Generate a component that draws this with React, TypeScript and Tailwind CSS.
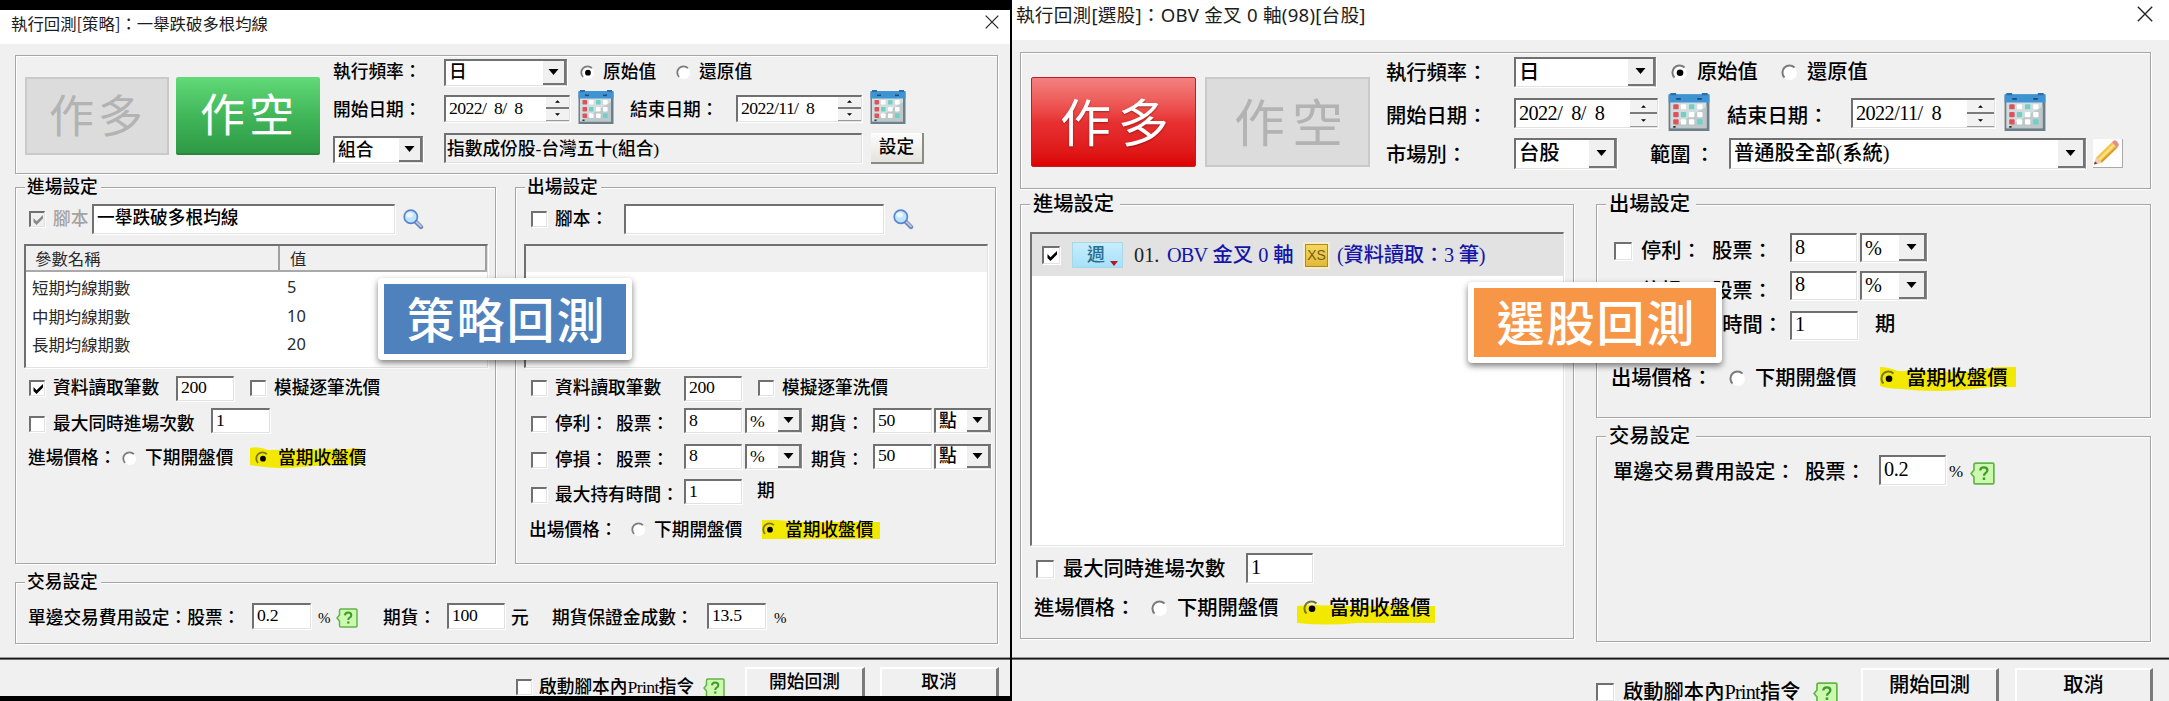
import React from "react";
import clsx from "clsx";

type Kids = { children?: React.ReactNode; className?: string };

const SUNKEN =
  "border-t-2 border-l-2 border-r border-b border-t-[#707070] border-l-[#707070] border-r-[#e2e2e2] border-b-[#e2e2e2] shadow-[1px_1px_0_#fff]";

function Group({ title, big, className, children }: Kids & { title?: string; big?: boolean }) {
  return (
    <section
      className={clsx(
        "shrink-0 border border-[#a6a6a6] shadow-[1px_1px_0_#fff,inset_1px_1px_0_#fff]",
        className,
      )}
    >
      {title && (
        <h2
          className={clsx(
            "ml-[9px] whitespace-nowrap bg-[#f0f0f0] font-medium",
            big ? "-mt-[12px] h-[22px] w-[90px] pl-[3px] leading-[22px]" : "-mt-[11px] h-[20px] w-[76px] pl-[2px] leading-[20px]",
          )}
        >
          {title}
        </h2>
      )}
      {children}
    </section>
  );
}

function Row({ className, children }: Kids) {
  return <div className={clsx("grid items-center whitespace-nowrap font-medium", className)}>{children}</div>;
}

function Field({ className, children }: Kids) {
  return (
    <div className={clsx(SUNKEN, "flex items-center overflow-hidden bg-white pl-[3px]", className)}>
      <span className="-mt-[3px] tracking-[-0.3px]">{children}</span>
    </div>
  );
}

function Combo({ className, arrow, children }: Kids & { arrow?: string }) {
  return (
    <div
      className={clsx(
        "flex items-stretch overflow-hidden border-t-2 border-l-2 border-r border-b border-t-[#707070] border-l-[#707070] border-r-[#8a8a8a] border-b-[#e2e2e2] bg-white pl-[3px] shadow-[1px_1px_0_#fff]",
        className,
      )}
    >
      <span className="-mt-[1px] flex flex-1 items-center">{children}</span>
      <span
        className={clsx(
          "flex shrink-0 items-center justify-center border-r-2 border-b-2 border-r-[#747474] border-b-[#747474] bg-[#f0f0f0]",
          arrow ?? "w-[23px]",
        )}
      >
        <svg viewBox="0 0 10 6" className="h-[6px] w-[11px]">
          <path d="M0 0H10L5 6Z" fill="#000" />
        </svg>
      </span>
    </div>
  );
}

function DateBox({ className, spin, children }: Kids & { spin: string }) {
  return (
    <div className={clsx(SUNKEN, "flex overflow-hidden bg-white pl-[3px]", className)}>
      <span className="-mt-[1px] flex flex-1 items-center tracking-[-0.6px] whitespace-pre">{children}</span>
      <span className={clsx("flex shrink-0 flex-col", spin)}>
        <span className="flex flex-1 items-center justify-center border-b-2 border-[#7b7b7b] bg-[#f2f2f2]">
          <svg viewBox="0 0 6 3" className="h-[3px] w-[5px]"><path d="M3 0L6 3H0Z" /></svg>
        </span>
        <span className="flex flex-1 items-center justify-center border-b border-[#9b9b9b] bg-[#f2f2f2]">
          <svg viewBox="0 0 6 3" className="h-[3px] w-[5px]"><path d="M0 0H6L3 3Z" /></svg>
        </span>
      </span>
    </div>
  );
}

function Check({ on, off, big, gap, className, children }: Kids & { on?: boolean; off?: boolean; big?: boolean; gap?: string }) {
  return (
    <label className={clsx("flex items-center", gap ?? "gap-[9px]", off && "text-[#a3a3a3]", className)}>
      <span
        className={clsx(
          SUNKEN,
          "flex shrink-0 items-center justify-center",
          big ? "size-[18px]" : "size-[16px]",
          off ? "bg-[#f0f0f0]" : "bg-white",
        )}
      >
        {on && (
          <svg viewBox="0 0 12 12" className="size-[12px]">
            <path d="M1.5 4V8L4.5 11L11 4.6V1L4.5 7.2Z" fill={off ? "#8b8b8b" : "#000"} />
          </svg>
        )}
      </span>
      {children && <span>{children}</span>}
    </label>
  );
}

function Radio({ on, big, mark, className, children }: Kids & { on?: boolean; big?: boolean; mark?: React.ReactNode }) {
  return (
    <label className={clsx("relative flex items-center", big ? "gap-[9px]" : "gap-[8px]", className)}>
      {mark}
      <svg viewBox="0 0 16 16" className={clsx("relative shrink-0", big ? "size-[17px]" : "size-[15px]")}>
        {!mark && <circle cx="8.5" cy="8.5" r="6.5" fill="#fff" />}
        <path d="M3.3 12.7A6.6 6.6 0 0 1 12.7 3.3" fill="none" stroke={mark ? "#7d7820" : "#7c7c7c"} strokeWidth="1.9" />
        {on && <circle cx="8.5" cy="8.2" r="3.1" fill="#000" />}
      </svg>
      <span className="relative">{children}</span>
    </label>
  );
}

function Mark({ d, className, box }: { d: string; className: string; box: string }) {
  return (
    <svg viewBox={box} preserveAspectRatio="none" className={clsx("absolute", className)}>
      <path d={d} fill="#f3e900" />
    </svg>
  );
}

function Calendar({ className }: { className: string }) {
  const cells = [
    ["#d9545b", 4.5, 10], ["#fff", 11, 10], ["#6fd0c8", 18, 10], ["#fff", 25, 10],
    ["#d9545b", 4.5, 17], ["#6fd0c8", 11, 17], ["#fff", 18, 17], ["#fff", 25, 17],
    ["#d9545b", 4.5, 23.5], ["#fff", 11, 23.5], ["#fff", 18, 23.5], ["#6fd0c8", 25, 23.5],
  ] as const;
  return (
    <svg viewBox="0 0 36 34" preserveAspectRatio="none" className={className}>
      <rect x="0.5" y="2" width="35" height="32" fill="#6d7f88" />
      <rect x="2" y="8" width="31" height="23.5" fill="#d5dcdd" />
      <path d="M2 31.5L33 12V31.5Z" fill="#bcc8c9" />
      <rect x="0.5" y="1" width="35" height="7.5" fill="#3f93d2" />
      <rect x="2" y="0" width="5" height="2" fill="#2f6fa8" />
      <rect x="29" y="0" width="5" height="2" fill="#2f6fa8" />
      <rect x="7" y="4.5" width="4" height="1.6" fill="#1e4f7d" />
      <rect x="25" y="4.5" width="4" height="1.6" fill="#1e4f7d" />
      {cells.map(([fill, x, y]) => (
        <rect key={`${x}-${y}`} x={x} y={y} width="4.6" height="4.6" rx="0.8" fill={fill} />
      ))}
      <rect x="4.5" y="29.5" width="2" height="1.6" fill="#333" />
    </svg>
  );
}

function Magnifier() {
  return (
    <svg viewBox="0 0 21 21" className="size-[21px]">
      <path d="M12 12L18 18" stroke="#6f86b5" strokeWidth="4.4" strokeLinecap="round" />
      <path d="M13.5 13L18 17.4" stroke="#b9c8e6" strokeWidth="1.8" strokeLinecap="round" />
      <circle cx="7.8" cy="7.8" r="6.6" fill="#bfe4fb" stroke="#5b86cf" strokeWidth="1.7" />
      <ellipse cx="6.6" cy="5.8" rx="3.4" ry="2.6" fill="#eaf7ff" />
    </svg>
  );
}

function Help({ className }: { className: string }) {
  return (
    <svg viewBox="0 0 22 20" preserveAspectRatio="none" className={className}>
      <path d="M5 1H20Q21 1 21 2V18Q21 19 20 19H5Q3.5 19 3.5 17.5V13L1 10L3.5 7V2.5Q3.5 1 5 1Z" fill="#cdf8b0" stroke="#62b548" strokeWidth="1.5" />
      <path d="M9 7.4Q9.2 4.6 12.2 4.6Q15.3 4.6 15.3 7.2Q15.3 8.8 13.6 9.7Q12.3 10.4 12.3 12" fill="none" stroke="#3f9a2a" strokeWidth="2" />
      <rect x="11.2" y="13.4" width="2.2" height="2.2" fill="#3f9a2a" />
    </svg>
  );
}

function Pencil() {
  return (
    <div className="flex h-[29px] w-[30px] items-center justify-center border-r border-b border-[#a8a8a8] bg-[#fdfdfd]">
      <svg viewBox="0 0 30 29" className="h-[29px] w-[30px]">
        <path d="M1 27L3.5 19.5L19.5 4L25 9.5L9 25Z" fill="#f3c546" />
        <path d="M5.5 21L21 5.8L22.7 7.5L7.2 22.8Z" fill="#fbe08a" />
        <path d="M7.8 23.6L23.8 8.2L25 9.5L9 25Z" fill="#d79a2c" />
        <path d="M19.5 4L21.5 2.2Q23 1.4 24.8 3.2L26 4.6Q27.2 6.2 26.3 7.8L25 9.5Z" fill="#e58c86" />
        <path d="M1 27L3.5 19.5Q6 20 6.4 22.4Q8.6 22.8 9 25Z" fill="#edcfae" />
        <path d="M1 27L2 23.8L4.6 26Z" fill="#6a3b3b" />
      </svg>
    </div>
  );
}

function Close({ className }: { className: string }) {
  return (
    <svg viewBox="0 0 14 14" className={className}>
      <path d="M0.7 0.7L13.3 13.3M13.3 0.7L0.7 13.3" stroke="#222" strokeWidth="1.2" fill="none" />
    </svg>
  );
}

function SideButton({ className, children }: Kids) {
  return (
    <button className={clsx("flex shrink-0 items-center justify-center font-['Noto_Sans_CJK_TC',sans-serif] font-normal", className)}>
      {children}
    </button>
  );
}

const GRAY = "border-2 border-[#c9c9c9] bg-[#dcdcdc] text-[#b3b3b3]";

function Push({ className, children }: Kids) {
  return (
    <button
      className={clsx(
        "self-start border-t-2 border-l-2 border-r-[3px] border-t-white border-l-white border-r-[#7a7a7a] bg-[#f0f0f0] text-center",
        className,
      )}
    >
      {children}
    </button>
  );
}

function FooterRule() {
  return <div className="h-[3px] shrink-0 border-t border-b border-t-[#9a9a9a] border-b-[#6e6e6e] bg-[#161616]" />;
}

function StrategyWindow() {
  return (
    <main className="relative mt-[10px] flex h-[686px] w-[1010px] shrink-0 flex-col overflow-hidden bg-[#f0f0f0] text-[17.7px] leading-[20px]">
      <header className="flex h-[34px] shrink-0 items-start justify-between bg-white pr-[11px] pl-[11px] font-['Noto_Sans_CJK_TC',sans-serif] text-[16.4px] text-[#1c1c1c]">
        <h1 className="mt-[3px] whitespace-nowrap">執行回測[策略]：一舉跌破多根均線</h1>
        <Close className="mt-[5px] size-[14px]" />
      </header>

      <Group className="mt-[11px] ml-[15px] flex h-[119px] w-[983px] pl-[9px]">
        <SideButton className={clsx(GRAY, "mt-[21px] h-[78px] w-[144px] pb-[5px] pl-[2px] text-[45px] tracking-[4px]")}>作多</SideButton>
        <SideButton className="mt-[21px] ml-[7px] h-[78px] w-[144px] rounded-[2px] border-b-2 border-[#2b8540] bg-linear-to-b from-[#62da78] via-[#41b75a] to-[#2e9a46] pb-[4px] pl-[2px] text-[45px] tracking-[4px] text-white">作空</SideButton>
        <div className="ml-[13px]">
          <Row className="h-[32px] grid-cols-[111px_136px_96px_100px]">
            <span>執行頻率：</span>
            <Combo className="h-[27px] w-[123px]">日</Combo>
            <Radio on>原始值</Radio>
            <Radio>還原值</Radio>
          </Row>
          <Row className="h-[40px] grid-cols-[111px_134px_52px_106px_134px_40px]">
            <span className="mt-[3px]">開始日期：</span>
            <DateBox className="h-[27px] w-[126px]" spin="w-[23px]">2022/  8/  8</DateBox>
            <Calendar className="mb-[2px] h-[34px] w-[36px]" />
            <span className="mt-[3px]">結束日期：</span>
            <DateBox className="h-[27px] w-[126px]" spin="w-[23px]">2022/11/  8</DateBox>
            <Calendar className="mb-[2px] h-[34px] w-[36px]" />
          </Row>
          <Row className="h-[40px] grid-cols-[111px_427px_60px]">
            <Combo className="mt-[3px] h-[27px] w-[90px]">組合</Combo>
            <div className={clsx(SUNKEN, "flex h-[30px] w-[418px] items-center pl-px")}>指數成份股-台灣五十(組合)</div>
            <button className="h-[31px] w-[53px] border-r-2 border-b-2 border-[#8b8b85] bg-linear-to-b from-[#fdfdfc] to-[#e4e4dd]">設定</button>
          </Row>
        </div>
      </Group>

      <div className="mt-[13px] ml-[15px] flex gap-[19px]">
        <Group title="進場設定" className="h-[377px] w-[481px]">
          <Row className="h-[44px] grid-cols-[63px_311px_30px] pl-[13px]">
            <Check on off gap="gap-[8px]">腳本</Check>
            <Field className="h-[30px] w-[303px]"><span className="tracking-normal">一舉跌破多根均線</span></Field>
            <Magnifier />
          </Row>
          <div className={clsx(SUNKEN, "mt-[3px] ml-[8px] h-[124px] w-[464px] bg-white font-['Noto_Sans_CJK_TC',sans-serif] text-[16.4px] text-[#2a2a2a]")}>
            <div className="flex h-[26px] border-b-2 border-[#a9a9a9] bg-[#f0f0f0] leading-[25px]">
              <span className="w-[254px] border-r-2 border-[#a0a0a0] pl-[9px]">參數名稱</span>
              <span className="ml-[2px] w-[205px] border-r-2 border-[#a0a0a0] pl-[8px]">值</span>
            </div>
            {[["短期均線期數", "5"], ["中期均線期數", "10"], ["長期均線期數", "20"]].map(([name, value]) => (
              <div key={name} className="grid h-[28.6px] translate-y-[1px] grid-cols-[255px_100px] items-center pl-[6px]">
                <span>{name}</span>
                <span className="font-['Noto_Sans',sans-serif]">{value}</span>
              </div>
            ))}
          </div>
          <Row className="h-[40px] grid-cols-[147px_74px_140px] pl-[13px]">
            <Check on gap="gap-[8px]">資料讀取筆數</Check>
            <Field className="h-[25px] w-[58px]">200</Field>
            <Check gap="gap-[8px]">模擬逐筆洗價</Check>
          </Row>
          <Row className="h-[32px] grid-cols-[182px_70px] pl-[13px]">
            <Check gap="gap-[8px]">最大同時進場次數</Check>
            <Field className="mb-[7px] h-[25px] w-[59px]">1</Field>
          </Row>
          <Row className="h-[36px] grid-cols-[94px_133px_120px] pl-[12px]">
            <span>進場價格：</span>
            <Radio>下期開盤價</Radio>
            <Radio on mark={<Mark box="0 0 115 22" className="-top-[1px] -left-[5px] h-[22px] w-[115px]" d="M0 1Q8 -1 18 3L100 2Q108 0 110 2L113 18Q80 17 52 20Q30 23 0 18Z" />}>當期收盤價</Radio>
          </Row>
        </Group>

        <Group title="出場設定" className="h-[377px] w-[481px]">
          <Row className="h-[44px] grid-cols-[93px_269px_30px] pl-[15px]">
            <Check gap="gap-[8px]">腳本：</Check>
            <Field className="h-[30px] w-[260px]" />
            <Magnifier />
          </Row>
          <div className={clsx(SUNKEN, "mt-[3px] ml-[8px] h-[124px] w-[464px] bg-white")}>
            <div className="h-[26px] bg-[#f0f0f0]" />
          </div>
          <Row className="h-[40px] grid-cols-[153px_74px_140px] pl-[15px]">
            <Check gap="gap-[8px]">資料讀取筆數</Check>
            <Field className="h-[25px] w-[58px]">200</Field>
            <Check gap="gap-[8px]">模擬逐筆洗價</Check>
          </Row>
          <Row className="h-[32px] grid-cols-[85px_68px_61px_66px_62px_61px_58px] pl-[15px]">
            <Check gap="gap-[8px]">停利：</Check>
            <span>股票：</span>
            <Field className="mb-[7px] h-[25px] w-[58px]">8</Field>
            <Combo className="mb-[7px] h-[25px] w-[57px]">%</Combo>
            <span>期貨：</span>
            <Field className="mb-[7px] h-[25px] w-[59px]">50</Field>
            <Combo className="mb-[7px] h-[25px] w-[57px]">點</Combo>
          </Row>
          <Row className="h-[39px] grid-cols-[85px_68px_61px_66px_62px_61px_58px] pl-[15px]">
            <Check gap="gap-[8px]">停損：</Check>
            <span>股票：</span>
            <Field className="mb-[7px] h-[25px] w-[58px]">8</Field>
            <Combo className="mb-[7px] h-[25px] w-[57px]">%</Combo>
            <span>期貨：</span>
            <Field className="mb-[7px] h-[25px] w-[59px]">50</Field>
            <Combo className="mb-[7px] h-[25px] w-[57px]">點</Combo>
          </Row>
          <Row className="h-[32px] grid-cols-[153px_73px_30px] pl-[15px]">
            <Check gap="gap-[8px]">最大持有時間：</Check>
            <Field className="mb-[7px] h-[25px] w-[58px]">1</Field>
            <span className="mb-[8px]">期</span>
          </Row>
          <Row className="h-[37px] grid-cols-[102px_131px_120px] pl-[13px]">
            <span>出場價格：</span>
            <Radio>下期開盤價</Radio>
            <Radio on mark={<Mark box="0 0 118 19" className="top-0 left-0 h-[19px] w-[118px]" d="M0 0H14L40 2H118V19H0Z" />}>當期收盤價</Radio>
          </Row>
        </Group>
      </div>

      <Group title="交易設定" className="mt-[18px] ml-[15px] h-[62px] w-[983px]">
        <Row className="mt-[8px] h-[36px] grid-cols-[224px_66px_18px_47px_64px_64px_41px_155px_67px_20px] pl-[12px]">
          <span>單邊交易費用設定：股票：</span>
          <Field className="mb-[4px] h-[26px] w-[59px]">0.2</Field>
          <span className="text-[15px]">%</span>
          <Help className="h-[20px] w-[22px]" />
          <span>期貨：</span>
          <Field className="mb-[4px] h-[26px] w-[58px]">100</Field>
          <span>元</span>
          <span>期貨保證金成數：</span>
          <Field className="mb-[4px] h-[26px] w-[59px]">13.5</Field>
          <span className="text-[15px]">%</span>
        </Row>
      </Group>

      <div className="h-[13px] shrink-0" />
      <FooterRule />
      <Row className="h-[54px] shrink-0 grid-cols-[187px_42px_135px_120px] pl-[516px]">
        <Check gap="gap-[7px]">啟動腳本內<span className="tracking-[-0.6px]">Print</span>指令</Check>
        <Help className="mt-[1px] h-[20px] w-[22px]" />
        <Push className="mt-[7px] h-[40px] w-[120px] pb-[12px] leading-[24px]">開始回測</Push>
        <Push className="mt-[7px] h-[40px] w-[119px] pb-[12px] leading-[24px]">取消</Push>
      </Row>
    </main>
  );
}

function ScreenerWindow() {
  return (
    <main className="ml-[2px] flex h-[701px] w-[1157px] shrink-0 flex-col overflow-hidden bg-[#f0f0f0] text-[20.3px] leading-[22px]">
      <header className="flex h-[40px] shrink-0 items-start justify-between bg-white pr-[16px] pl-[4px] font-['Noto_Sans','Noto_Sans_CJK_TC',sans-serif] text-[18.6px] tracking-[0.25px] text-[#1c1c1c]">
        <h1 className="mt-[4px] whitespace-nowrap">執行回測[選股]：OBV 金叉 0 軸(98)[台股]</h1>
        <Close className="mt-[6px] size-[16px]" />
      </header>

      <Group className="mt-[12px] ml-[8px] flex h-[137px] w-[1131px] pl-[10px]">
        <SideButton className="mt-[24px] h-[90px] w-[165px] rounded-[2px] border border-[#b92020] bg-linear-to-b from-[#f28080] via-[#e73032] to-[#dc0000] pb-[5px] pl-[9px] text-[51px] tracking-[7px] text-white [text-shadow:0_1px_2px_rgba(90,0,0,0.5)]">作多</SideButton>
        <SideButton className={clsx(GRAY, "mt-[24px] ml-[9px] h-[90px] w-[165px] pb-[5px] pl-[9px] text-[51px] tracking-[7px]")}>作空</SideButton>
        <div className="ml-[16px]">
          <Row className="h-[38px] grid-cols-[128px_157px_110px_100px]">
            <span className="mt-[2px]">執行頻率：</span>
            <Combo className="mb-[1px] h-[30px] w-[142px]" arrow="w-[27px]">日</Combo>
            <Radio on big>原始值</Radio>
            <Radio big>還原值</Radio>
          </Row>
          <Row className="h-[44px] grid-cols-[128px_154px_59px_124px_153px_44px]">
            <span className="mt-[5px]">開始日期：</span>
            <DateBox className="h-[30px] w-[144px]" spin="w-[27px]">2022/  8/  8</DateBox>
            <Calendar className="mb-[2px] h-[38px] w-[42px]" />
            <span className="mt-[5px]">結束日期：</span>
            <DateBox className="h-[30px] w-[144px]" spin="w-[27px]">2022/11/  8</DateBox>
            <Calendar className="mb-[2px] h-[38px] w-[42px]" />
          </Row>
          <Row className="h-[36px] grid-cols-[128px_136px_79px_364px_30px]">
            <span className="mt-[4px]">市場別：</span>
            <Combo className="h-[31px] w-[103px]" arrow="w-[27px]">台股</Combo>
            <span className="mt-[4px]">範圍<span className="ml-[4px]">：</span></span>
            <Combo className="h-[31px] w-[357px]" arrow="w-[27px]">普通股全部(系統)</Combo>
            <Pencil />
          </Row>
        </div>
      </Group>

      <div className="mt-[15px] ml-[8px] flex gap-[22px]">
        <Group big title="進場設定" className="h-[435px] w-[554px]">
          <div className={clsx(SUNKEN, "mt-[17px] ml-[9px] h-[314px] w-[534px] bg-white text-[#1414a8]")}>
            <Row className="h-[42px] grid-cols-[30px_62px_33px_136px_34px_160px] bg-[#e2e2e2] pl-[10px]">
              <Check on big />
              <span className="flex h-[26px] w-[51px] items-center justify-center border border-[#a9d6e8] bg-linear-to-b from-[#c8edfb] to-[#a4e2fb] text-[18px] text-[#2b6f8c]">
                <span className="ml-[10px]">週</span>
                <svg viewBox="0 0 8 5" className="mt-[17px] ml-[5px] h-[5px] w-[8px]"><path d="M0 0H8L4 5Z" fill="#c20f2c" /></svg>
              </span>
              <span className="text-[#222]">01.</span>
              <span><span className="tracking-[-0.8px]">OBV</span> 金叉 0 軸</span>
              <span className="flex size-[27px] items-center justify-center border-2 border-[#f6eccb] bg-[#b08a1c] p-px">
                <span className="flex size-full items-center justify-center bg-linear-to-b from-[#f3d860] to-[#e0b93a] font-['Liberation_Sans',sans-serif] text-[14px] font-normal text-[#7b5b10]">XS</span>
              </span>
              <span className="tracking-[-0.2px]">(資料讀取：3 筆)</span>
            </Row>
          </div>
          <Row className="h-[45px] grid-cols-[210px_70px] pl-[15px]">
            <Check big>最大同時進場次數</Check>
            <Field className="mb-[1px] h-[30px] w-[67px]">1</Field>
          </Row>
          <Row className="h-[34px] grid-cols-[117px_152px_140px] pl-[13px]">
            <span>進場價格：</span>
            <Radio big>下期開盤價</Radio>
            <Radio on big mark={<Mark box="0 0 138 20" className="top-[8px] -left-[6px] h-[20px] w-[138px]" d="M0 1L12 0L60 1H138V18H60Q30 21 0 18Z" />}>當期收盤價</Radio>
          </Row>
        </Group>

        <div className="flex flex-col gap-[18px]">
          <Group big title="出場設定" className="h-[214px] w-[555px]">
            <Row className="mt-[17px] h-[38px] grid-cols-[98px_78px_70px_70px] pl-[17px]">
              <Check big>停利：</Check>
              <span>股票：</span>
              <Field className="mb-[7px] h-[29px] w-[67px]">8</Field>
              <Combo className="mb-[7px] h-[29px] w-[67px]" arrow="w-[27px]">%</Combo>
            </Row>
            <Row className="h-[42px] grid-cols-[98px_78px_70px_70px] pl-[17px]">
              <Check big>停損：</Check>
              <span>股票：</span>
              <Field className="mb-[12px] h-[29px] w-[67px]">8</Field>
              <Combo className="mb-[12px] h-[29px] w-[67px]" arrow="w-[27px]">%</Combo>
            </Row>
            <Row className="h-[26px] grid-cols-[176px_85px_30px] pl-[17px]">
              <Check big>最大持有時間：</Check>
              <Field className="-my-[2px] h-[29px] w-[68px]">1</Field>
              <span className="mb-[3px]">期</span>
            </Row>
            <Row className="mt-[23px] h-[34px] grid-cols-[118px_151px_140px] pl-[14px]">
              <span>出場價格：</span>
              <Radio big>下期開盤價</Radio>
              <Radio on big mark={<Mark box="0 0 136 25" className="top-0 left-0 h-[25px] w-[136px]" d="M0 0Q8 0 18 4L90 5L116 0H136V20H110Q60 27 22 22Q8 22 0 19Z" />}>當期收盤價</Radio>
            </Row>
          </Group>
          <Group big title="交易設定" className="h-[206px] w-[555px]">
            <Row className="h-[50px] grid-cols-[192px_74px_70px_21px_30px] pl-[16px]">
              <span>單邊交易費用設定：</span>
              <span>股票：</span>
              <Field className="mb-[4px] h-[30px] w-[67px]">0.2</Field>
              <span className="text-[17px]">%</span>
              <Help className="mt-[3px] h-[23px] w-[25px]" />
            </Row>
          </Group>
        </div>
      </div>

      <div className="h-[15px] shrink-0" />
      <FooterRule />
      <Row className="h-[64px] shrink-0 grid-cols-[217px_48px_154px_138px] pl-[584px]">
        <Check big>啟動腳本內<span className="tracking-[-0.8px]">Print</span>指令</Check>
        <Help className="mt-[3px] h-[23px] w-[25px]" />
        <Push className="mt-[8px] h-[48px] w-[138px] pb-[16px] leading-[28px]">開始回測</Push>
        <Push className="mt-[8px] h-[48px] w-[138px] pb-[16px] leading-[28px]">取消</Push>
      </Row>
    </main>
  );
}

function Badge({ className, children }: Kids) {
  return (
    <div
      className={clsx(
        "absolute flex items-center justify-center rounded-[4px] border-[6px] border-white pb-[5px] pl-[3px] font-['Noto_Sans_CJK_TC',sans-serif] text-[48px] font-medium tracking-[2px] whitespace-nowrap text-white shadow-[0_3px_6px_rgba(0,0,0,0.5)]",
        className,
      )}
    >
      {children}
    </div>
  );
}

export default function App() {
  return (
    <div className="relative flex h-[701px] w-[2169px] overflow-hidden bg-black font-['Liberation_Serif','Noto_Sans_CJK_TC',sans-serif] text-black">
      <StrategyWindow />
      <ScreenerWindow />
      <Badge className="top-[278px] left-[378px] h-[82px] w-[254px] bg-[#4f81bd]">策略回測</Badge>
      <Badge className="top-[282px] left-[1468px] h-[81px] w-[254px] bg-[#f79646]">選股回測</Badge>
    </div>
  );
}
